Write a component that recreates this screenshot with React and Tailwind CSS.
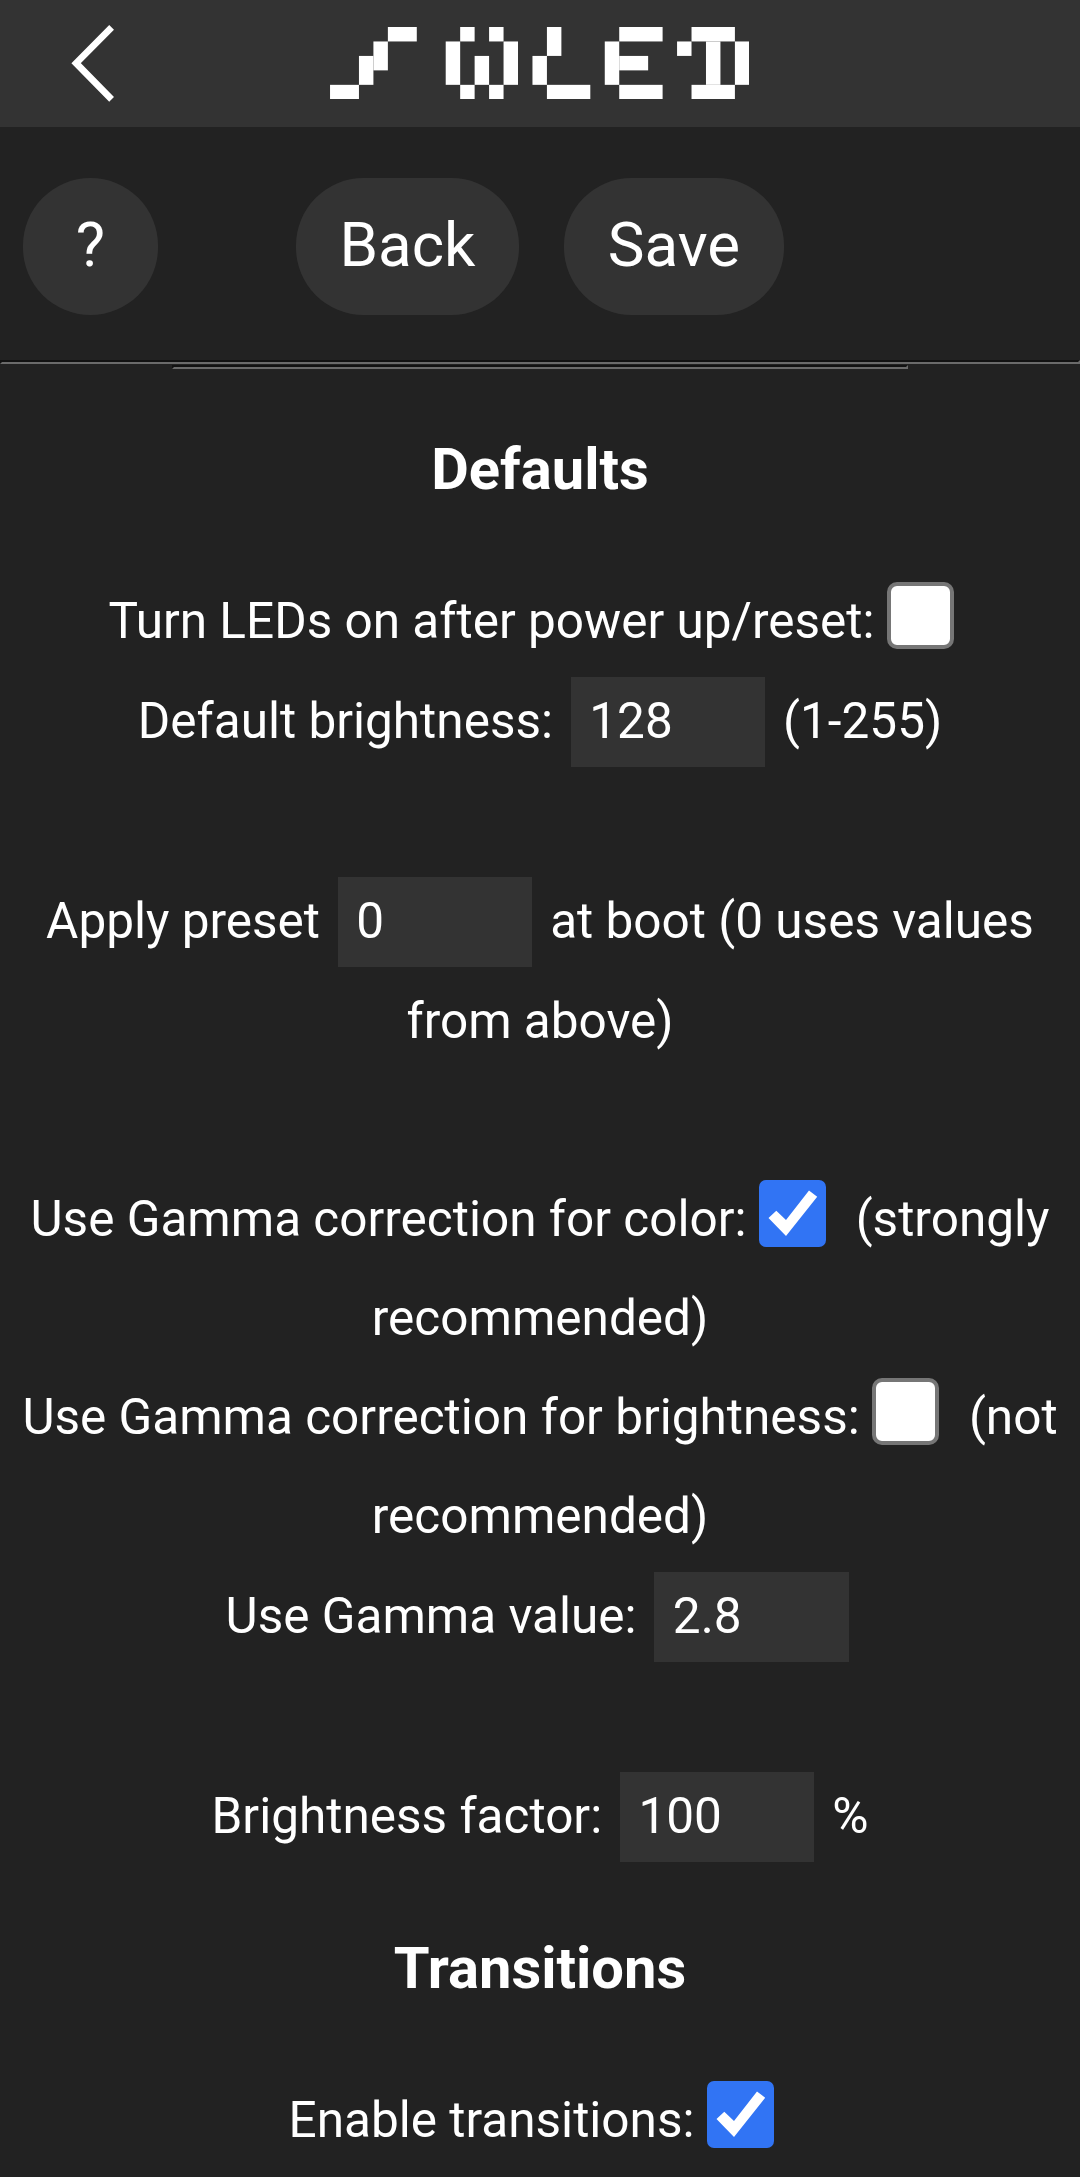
import { useState } from 'react'

// one entry per run of lit pixels: x, y, width, height on a 29x5 grid
const LOGO_PIXELS = [
    [4, 0, 2, 1], [3, 1, 1, 2], [2, 2, 1, 2], [0, 4, 2, 1],
    [9, 0, 1, 1], [11, 0, 1, 1], [8, 1, 1, 3], [10, 2, 1, 2], [12, 1, 1, 3], [9, 4, 1, 1], [11, 4, 1, 1],
    [15, 0, 1, 2], [14, 2, 1, 2], [15, 4, 3, 1],
    [20, 0, 3, 1], [19, 1, 1, 3], [20, 2, 2, 1], [20, 4, 3, 1],
    [25, 0, 3, 1], [24, 1, 1, 1], [26, 1, 1, 3], [28, 1, 1, 3], [25, 4, 3, 1],
]

function Logo() {
    return (
        <svg viewBox="0 0 29 5" className="w-[419.4px] h-[72.3px]" fill="#fff">
            {LOGO_PIXELS.map(([x, y, w, h]) => (
                <rect key={`${x}-${y}`} x={x} y={y} width={w} height={h} />
            ))}
        </svg>
    )
}

function Row({ children }) {
    return (
        <div className="flex h-[99px] items-center justify-center whitespace-nowrap">
            {children}
        </div>
    )
}

function FieldRow({ label, value, onChange, suffix }) {
    return (
        <div className="flex h-[101px] items-center justify-center whitespace-nowrap">
            {label}
            <input
                type="text"
                inputMode="decimal"
                value={value}
                onChange={(e) => onChange(e.target.value)}
                className="mt-0.5 mr-[5.6px] ml-[17.8px] h-[90px] w-[194.5px] bg-[#333] pb-0.5 pl-[18.5px] text-white outline-none"
            />
            {suffix && <span className="ml-[12.2px]">{suffix}</span>}
        </div>
    )
}

function CheckRow({ label, checked, onChange, suffix }) {
    return (
        <Row>
            {label}
            <button
                type="button"
                role="checkbox"
                aria-checked={checked}
                onClick={() => onChange(!checked)}
                className="mr-[17.5px] mb-[11px] ml-[12.5px] size-[67px] shrink-0"
            >
                {checked ? (
                    <svg viewBox="0 0 67 67" className="size-[67px]">
                        <rect width="67" height="67" rx="7" fill="#3174f4" />
                        <path d="M9.5 38L17.3 30.7L27 40L50 10.5L58.2 16.7L27 56Z" fill="#fff" />
                    </svg>
                ) : (
                    <span className="block size-[67px] rounded-[10px] border-4 border-[#767676] bg-white" />
                )}
            </button>
            {suffix && <span className="ml-[12.2px]">{suffix}</span>}
        </Row>
    )
}

function PillButton({ children, className }) {
    return (
        <button
            type="button"
            className={`h-[137px] rounded-[67.5px] bg-[#333] pb-px text-[61.9px] leading-none ${className}`}
        >
            {children}
        </button>
    )
}

function Divider({ className }) {
    return (
        <hr className={`h-1 border-2 border-t-[#121212] border-r-[#6b6b6b] border-b-[#6b6b6b] border-l-[#121212] ${className}`} />
    )
}

function Heading({ children, className }) {
    return (
        <h3 className={`mb-[53px] flex h-[99px] items-center justify-center text-[57.9px] font-bold ${className}`}>
            {children}
        </h3>
    )
}

export default function App() {
    const [form, setForm] = useState({
        bootOn: false,
        brightness: '128',
        preset: '0',
        gammaColor: true,
        gammaBrightness: false,
        gamma: '2.8',
        factor: '100',
        transitions: true,
    })

    const set = (name) => (value) => setForm(prev => ({ ...prev, [name]: value }))

    return (
        <div className="h-[2177px] w-[1080px] overflow-hidden bg-[#222] font-[Roboto,sans-serif] text-[49.5px] text-white">
            <header className="flex h-[127px] items-start bg-[#333]">
                <svg viewBox="0 0 50 80" className="mt-[23px] ml-[70px] h-20 w-[50px]" fill="none" stroke="#fff" strokeWidth="6.7">
                    <path d="M41.6 4.4L6.1 40.2L41.6 76.4" />
                </svg>
                <div className="mt-[27px] ml-[210px]">
                    <Logo />
                </div>
            </header>

            <div className="flex h-[233px] pt-[51px] pl-[23px]">
                <PillButton className="w-[135px]">?</PillButton>
                <PillButton className="ml-[138px] w-[223px]">Back</PillButton>
                <PillButton className="ml-[45px] w-[220px]">Save</PillButton>
            </div>
            <Divider />
            <Divider className="mt-px ml-[172px] w-[736px]" />

            <Heading className="mt-[50.5px]">Defaults</Heading>
            <CheckRow label="Turn LEDs on after power up/reset:" checked={form.bootOn} onChange={set('bootOn')} />
            <FieldRow label="Default brightness:" value={form.brightness} onChange={set('brightness')} suffix="(1-255)" />
            <Row />
            <FieldRow label="Apply preset" value={form.preset} onChange={set('preset')} suffix="at boot (0 uses values" />
            <Row>from above)</Row>
            <Row />
            <CheckRow label="Use Gamma correction for color:" checked={form.gammaColor} onChange={set('gammaColor')} suffix="(strongly" />
            <Row>recommended)</Row>
            <CheckRow label="Use Gamma correction for brightness:" checked={form.gammaBrightness} onChange={set('gammaBrightness')} suffix="(not" />
            <Row>recommended)</Row>
            <FieldRow label="Use Gamma value:" value={form.gamma} onChange={set('gamma')} />
            <Row />
            <FieldRow label="Brightness factor:" value={form.factor} onChange={set('factor')} suffix="%" />

            <Heading className="mt-[52px]">Transitions</Heading>
            <CheckRow label="Enable transitions:" checked={form.transitions} onChange={set('transitions')} />
        </div>
    )
}
